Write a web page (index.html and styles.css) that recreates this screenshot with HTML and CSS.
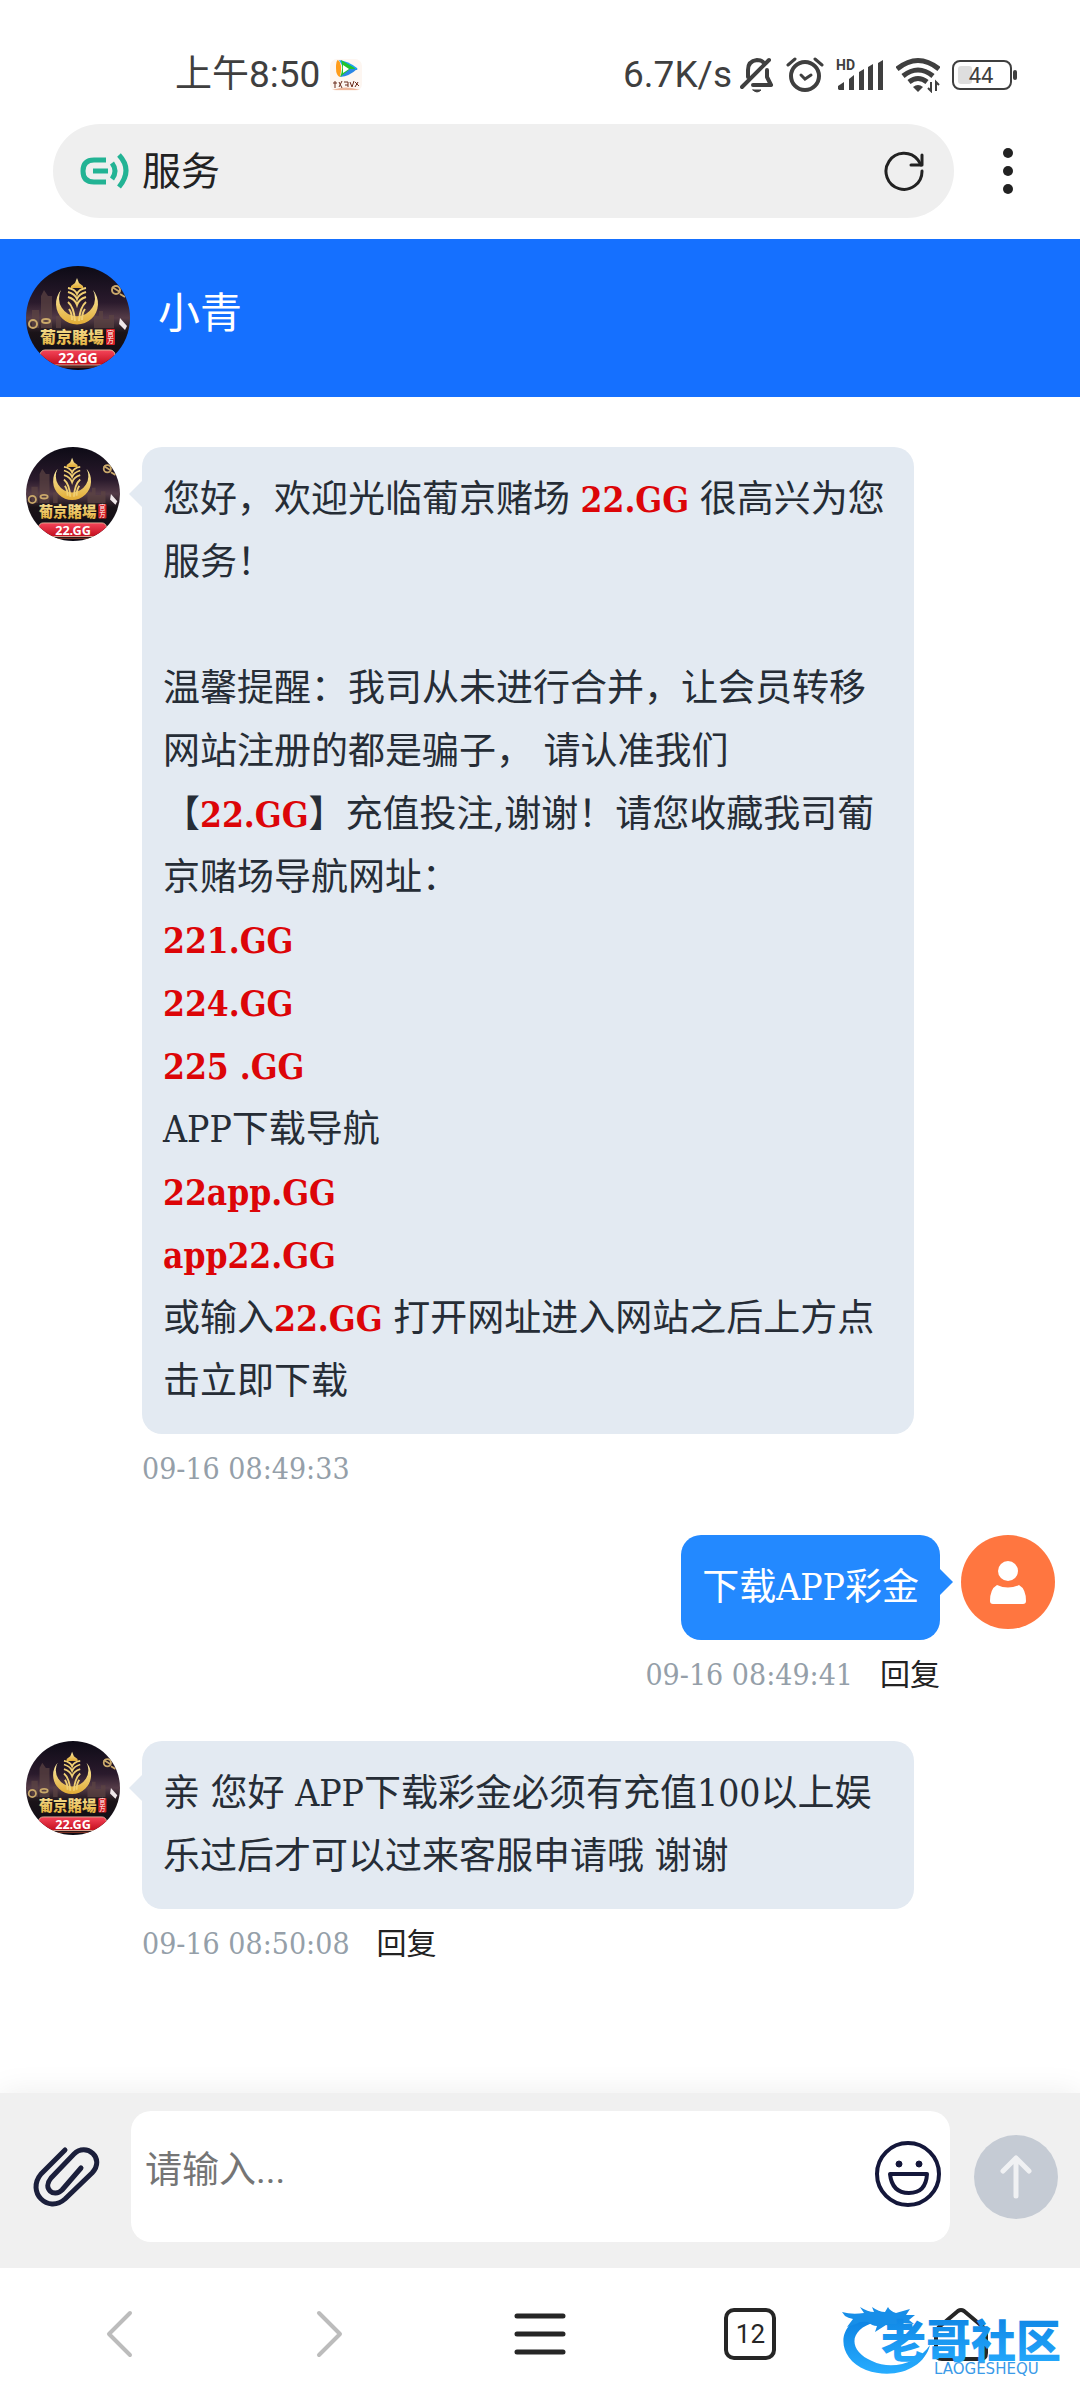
FILE: index.html
```html
<!DOCTYPE html>
<html lang="zh-CN">
<head>
    <meta charset="UTF-8">
    <meta name="viewport" content="width=device-width, initial-scale=1.0">
    <title>服务</title>
    <link rel="stylesheet" href="styles.css">
</head>
<body>
    <!-- shared avatar -->
    <svg class="defs" width="0" height="0" aria-hidden="true">
        <defs>
            <linearGradient id="night" x1="0" y1="0" x2="0" y2="1">
                <stop offset="0" stop-color="#0d0b16"/>
                <stop offset=".35" stop-color="#2a1a2c"/>
                <stop offset=".5" stop-color="#553c48"/>
                <stop offset=".64" stop-color="#1a1318"/>
                <stop offset="1" stop-color="#0c0a14"/>
            </linearGradient>
            <linearGradient id="gold" x1="0" y1="0" x2="0" y2="1">
                <stop offset="0" stop-color="#f9e9a4"/>
                <stop offset="1" stop-color="#e2ac35"/>
            </linearGradient>
            <linearGradient id="banner" x1="0" y1="0" x2="0" y2="1">
                <stop offset="0" stop-color="#f5455a"/>
                <stop offset="1" stop-color="#c30d1c"/>
            </linearGradient>
            <clipPath id="round"><circle cx="52" cy="52" r="52"/></clipPath>
            <symbol id="avatar" viewBox="0 0 104 104">
                <g clip-path="url(#round)">
                    <rect width="104" height="104" fill="url(#night)"/>
                    <path d="M15 62V30l3-6 4 6h4v32zM6 62V44h7v18zM30 62V50h5v12zM68 62V50h5v-5h4v8h6v-4h5v13z" fill="#5d4543" opacity=".7"/>
                    <g fill="none" stroke="#c9a86a" stroke-width="2">
                        <circle cx="90" cy="24" r="4"/><path d="M86 21l8 5M94 28l5 3"/>
                        <ellipse cx="7" cy="58" rx="4" ry="4"/><ellipse cx="20" cy="55" rx="4" ry="2"/>
                    </g>
                    <path d="M94 52l7 8-2 4-6-6z" fill="#f0e8ea"/>
                    <path d="M35 24a21 21 0 1 0 32 0a18 18 0 1 1-32 0z" fill="url(#gold)"/>
                    <path d="M51 12l2 5 4 3v2H45v-2l4-3z" fill="url(#gold)"/>
                    <g fill="none" stroke="#f0cf73" stroke-width="2">
                        <path d="M42 22q7 1 9 6q2-5 9-6"/>
                        <path d="M42 26q7 2 9 7q2-5 9-7M42 31q7 2 9 8q2-6 9-8"/>
                        <path d="M42 36q6 5 7 19M60 36q-6 5-7 19M43 43q3 4 3 11M59 43q-3 4-3 11"/>
                    </g>
                    <text class="avatar-name" x="14" y="77" fill="url(#gold)">葡京賭場</text>
                    <rect x="80" y="63" width="9" height="16" rx="1" fill="#d61f24"/>
                    <text class="avatar-tag" x="81" y="70">官</text>
                    <text class="avatar-tag" x="81" y="77">方</text>
                    <rect x="14" y="84" width="75" height="15" rx="5" fill="url(#banner)" stroke="#e5b49a" stroke-width="1"/>
                    <text class="avatar-site" x="52" y="97">22.GG</text>
                    <path d="M20 101h64" stroke="#a8432b" stroke-width="1"/>
                </g>
            </symbol>
        </defs>
    </svg>

    <div class="status-bar">
        <div class="status-left">
            <span>上午8:50</span>
            <svg width="32" height="32" viewBox="0 0 32 32">
                <rect width="32" height="32" rx="7" fill="#fdf6f1"/>
                <path d="M8 1q5 3 2 17q-4-1-4-9t2-8z" fill="#ff9c1a"/>
                <path d="M9 1q9 1 18 8q1 1 0 2L14 10z" fill="#1da0f2"/>
                <path d="M10 18q4-9 1-17l12 7q4 2 0 4z" fill="#1fc52c"/>
                <path d="M27 10q-7 7-17 8l10-8z" fill="#2b86e6"/>
                <path d="M13 6l6 4-6 4z" fill="#fff"/>
                <path d="M2 31q14-5 28 0z" fill="#eeb79c"/>
                <path d="M3 24h4M5 22v7M9 23l3 6M12 22l-3 6M14 23h4v5M15 26h3M20 23l2 5M24 22l-2 6M25 23l4 4M28 23l-3 5" stroke="#6b2c1c" stroke-width="1" fill="none"/>
            </svg>
        </div>
        <div class="status-right">
            <span>6.7K/s</span>
            <svg class="bell" width="34" height="36" viewBox="0 0 34 36" fill="none" stroke="#3f3f3f" stroke-width="4" stroke-linecap="round" stroke-linejoin="round">
                <path d="M2 30L29 3"/>
                <path d="M8 20v-7q0-9 9-10q5 0 7 3M27 13v7l4 8H13"/>
                <path d="M13 33h8q-4 4-8 0z" fill="#3f3f3f" stroke-width="1"/>
            </svg>
            <svg class="alarm" width="38" height="36" viewBox="0 0 38 36" fill="none" stroke="#3f3f3f" stroke-width="4" stroke-linecap="round">
                <circle cx="19" cy="19" r="14"/>
                <path d="M2 8l7-6M36 8l-7-6" stroke-width="3"/>
                <path d="M15 18l4 4 6-4" stroke-width="3"/>
            </svg>
            <svg class="signal" width="48" height="34" viewBox="0 0 48 34" fill="#3f3f3f">
                <text class="hd" x="0" y="12">HD</text>
                <path d="M2 31v-3l6-4v8H3zM13 21l5-4v15h-5zM23 14l5-3v21h-5zM32 9l5-3v26h-5zM42 5l5-3v30h-5z"/>
            </svg>
            <svg class="wifi" width="44" height="36" viewBox="0 0 44 36" fill="none" stroke="#3f3f3f" stroke-width="5">
                <path d="M1 12Q22-5 43 12M7 19q15-12 30 0M13 25q9-7 18 0"/>
                <path d="M17 30q5-4 10 0l-5 5z" fill="#3f3f3f" stroke="none"/>
                <path d="M35 25v9l-3-3M40 34v-9l3 3" stroke-width="2"/>
            </svg>
            <svg width="66" height="30" viewBox="0 0 66 30">
                <rect x="6" y="6" width="14" height="18" rx="3" fill="#dedede"/>
                <rect x="1" y="1" width="58" height="28" rx="7" fill="none" stroke="#3f3f3f" stroke-width="2"/>
                <path d="M63 12v6" stroke="#3f3f3f" stroke-width="4" stroke-linecap="round"/>
                <text class="battery" x="29" y="23">44</text>
            </svg>
        </div>
    </div>

    <div class="browser-bar">
        <div class="address">
            <svg width="50" height="36" viewBox="0 0 50 36" fill="none" stroke="#22b394" stroke-width="5">
                <path d="M26 7H14Q3 7 3 18t11 11h12"/>
                <path d="M13 18h15"/>
                <path d="M32 10q6 8 0 16M39 2q14 15 0 32"/>
            </svg>
            <span class="page-title">服务</span>
            <button type="button" aria-label="刷新">
                <svg width="40" height="40" viewBox="0 0 40 40" fill="none" stroke="#222" stroke-width="3" stroke-linecap="round" stroke-linejoin="round">
                    <path d="M38 20A18 18 0 1 1 34 9l3 5"/>
                    <path d="M38 4v10H27"/>
                </svg>
            </button>
        </div>
        <button type="button" class="more" aria-label="更多">
            <svg width="12" height="48" viewBox="0 0 12 48" fill="#222">
                <circle cx="6" cy="6" r="5"/><circle cx="6" cy="24" r="5"/><circle cx="6" cy="42" r="5"/>
            </svg>
        </button>
    </div>

    <header class="chat-header">
        <svg width="104" height="104"><use href="#avatar"/></svg>
        <h1>小青</h1>
    </header>

    <main class="chat">
        <div class="message">
            <svg class="avatar" width="94" height="94"><use href="#avatar"/></svg>
            <div class="content">
                <div class="bubble">您好，欢迎光临葡京赌场 <strong>22.GG</strong> 很高兴为您服务！<br><br>温馨提醒：我司从未进行合并，让会员转移网站注册的都是骗子， 请认准我们【<strong>22.GG</strong>】充值投注,谢谢！请您收藏我司葡京赌场导航网址：<br><strong>221.GG</strong><br><strong>224.GG</strong><br><strong>225 .GG</strong><br>APP下载导航<br><strong>22app.GG</strong><br><strong>app22.GG</strong><br>或输入<strong>22.GG</strong> 打开网址进入网站之后上方点击立即下载</div>
                <div class="meta"><time>09-16 08:49:33</time></div>
            </div>
        </div>

        <div class="message mine">
            <svg class="avatar" width="94" height="94" viewBox="0 0 94 94">
                <circle cx="47" cy="47" r="47" fill="#ff7640"/>
                <circle cx="47" cy="36" r="10" fill="#fff"/>
                <path d="M36 50q11 5 22 0q7 4 7 16q0 3-3 3H32q-3 0-3-3q0-12 7-16z" fill="#fff"/>
            </svg>
            <div class="content">
                <div class="bubble">下载APP彩金</div>
                <div class="meta"><time>09-16 08:49:41</time><button type="button">回复</button></div>
            </div>
        </div>

        <div class="message">
            <svg class="avatar" width="94" height="94"><use href="#avatar"/></svg>
            <div class="content">
                <div class="bubble">亲 您好 APP下载彩金必须有充值100以上娱乐过后才可以过来客服申请哦 谢谢</div>
                <div class="meta"><time>09-16 08:50:08</time><button type="button">回复</button></div>
            </div>
        </div>
    </main>

    <form class="composer">
        <button type="button" aria-label="附件">
            <svg width="68" height="62" viewBox="0 0 68 62" fill="none" stroke="#1b1f3b" stroke-width="5" stroke-linecap="round" stroke-linejoin="round">
                <path d="M33 4L9 28C-6 46 16 68 33 53L60 27C74 12 54-4 42 8L19 32C10 43 22 52 30 44L49 22"/>
            </svg>
        </button>
        <div class="input-box">
            <textarea id="message" rows="1" placeholder="请输入..." aria-label="请输入"></textarea>
            <button type="button" class="emoji" aria-label="表情">
                <svg width="68" height="68" viewBox="0 0 68 68" fill="none" stroke="#14173a" stroke-width="4" stroke-linejoin="round">
                    <circle cx="34" cy="34" r="31"/>
                    <path d="M16 34h37q-1 19-18 19T16 34z"/>
                    <circle cx="25" cy="24" r="3" fill="#14173a" stroke-width="1"/>
                    <circle cx="45" cy="24" r="3" fill="#14173a" stroke-width="1"/>
                </svg>
            </button>
        </div>
        <button type="submit" class="send" aria-label="发送">
            <svg width="32" height="44" viewBox="0 0 32 44" fill="none" stroke="#f0f1f3" stroke-width="5" stroke-linecap="round" stroke-linejoin="round">
                <path d="M16 41V3M3 16L16 3l13 13"/>
            </svg>
        </button>
    </form>

    <nav class="toolbar">
        <button type="button" aria-label="后退">
            <svg width="28" height="52" viewBox="0 0 28 52" fill="none" stroke="#bcbcbc" stroke-width="4" stroke-linecap="round" stroke-linejoin="round"><path d="M25 5L4 26l21 21"/></svg>
        </button>
        <button type="button" aria-label="前进">
            <svg width="28" height="52" viewBox="0 0 28 52" fill="none" stroke="#bcbcbc" stroke-width="4" stroke-linecap="round" stroke-linejoin="round"><path d="M3 5l21 21L3 47"/></svg>
        </button>
        <button type="button" aria-label="菜单">
            <svg width="60" height="52" viewBox="0 0 60 52" stroke="#262626" stroke-width="5" stroke-linecap="round"><path d="M7 8h46M7 26h46M7 44h46"/></svg>
        </button>
        <button type="button" class="tabs"><span>12</span></button>
        <button type="button" aria-label="主页">
            <svg width="54" height="54" viewBox="0 0 54 54" fill="none" stroke="#262626" stroke-width="4" stroke-linejoin="round"><path d="M24 4q3-2 6 0l19 16q3 3 3 6v20q0 6-6 6H8q-6 0-6-6V26q0-3 3-6z"/></svg>
        </button>
        <svg class="watermark" width="224" height="76" viewBox="0 0 224 76" aria-label="老哥社区">
            <defs>
                <linearGradient id="blue" x1="0" y1="0" x2="0" y2="1">
                    <stop offset="0" stop-color="#0b7fe0"/>
                    <stop offset="1" stop-color="#27adff"/>
                </linearGradient>
            </defs>
            <path d="M30 10C-6 14-8 52 24 65C52 75 82 64 88 40C76 58 50 66 30 56C6 46 6 24 34 17z" fill="url(#blue)"/>
            <path d="M0 7q10 3 22 1l-4-6q8 5 14 5l-2-5q7 5 13 5l3-5q2 4 8 6l14-4-4 6h9l-6 5 5 4-13-1-6 4-9-2-11 7 2-6q-5 0-9-4-8-1-12 2l-9 3 6-8q-5-1-8-3z" fill="#178ee8"/>
            <text class="mark-name" x="39" y="53" fill="url(#blue)">老哥社区</text>
            <text class="mark-latin" x="92" y="69">LAOGESHEQU</text>
        </svg>
    </nav>
</body>
</html>
```

FILE: styles.css
```css
* {
    box-sizing: border-box;
}
body {
    margin: 0;
    min-height: 100vh;
    display: flex;
    flex-direction: column;
    background-color: #fff;
    color: #262d36;
    font-family: "DejaVu Serif Condensed", "Noto Sans CJK SC", serif;
    font-size: 37px;
}
svg {
    display: block;
    flex-shrink: 0;
}
.defs {
    position: absolute;
}
button {
    padding: 0;
    border: none;
    background: none;
    color: inherit;
    font: inherit;
    cursor: pointer;
}

/* avatar artwork */
.avatar-name {
    font: 900 16px "Noto Sans CJK TC", sans-serif;
}
.avatar-tag {
    font: 7px "Noto Sans CJK SC", sans-serif;
    fill: #fff;
}
.avatar-site {
    font: bold 14px "Noto Sans", sans-serif;
    fill: #fff;
    text-anchor: middle;
}

/* phone status bar */
.status-bar {
    display: flex;
    justify-content: space-between;
    align-items: center;
    padding: 45px 62px 19px 175px;
    color: #3f3f3f;
    font-family: Roboto, "Noto Sans CJK SC", sans-serif;
    font-size: 37px;
    line-height: 60px;
}
.status-left,
.status-right {
    display: flex;
    align-items: center;
}
.status-left {
    gap: 10px;
}
.status-right {
    gap: 12px;
}
.bell {
    margin-left: -4px;
}
.hd {
    font: bold 14px Roboto, sans-serif;
}
.battery {
    font: 22px Roboto, sans-serif;
    fill: #3f3f3f;
    text-anchor: middle;
}

/* address bar */
.browser-bar {
    display: flex;
    align-items: center;
    padding: 0 66px 21px 53px;
    gap: 48px;
    font-family: Roboto, "Noto Sans CJK SC", sans-serif;
}
.address {
    flex: 1;
    display: flex;
    align-items: center;
    gap: 12px;
    height: 94px;
    padding: 0 30px 0 27px;
    border-radius: 47px;
    background-color: #efefef;
    color: #222;
}
.page-title {
    flex: 1;
    padding-bottom: 6px;
    font-size: 39px;
}

/* chat header */
.chat-header {
    display: flex;
    align-items: center;
    gap: 28px;
    padding: 27px 26px;
    background-color: #1570ff;
    color: #fff;
}
.chat-header h1 {
    margin: 0;
    padding-bottom: 8px;
    font-size: 42px;
    font-weight: normal;
    line-height: 60px;
}

/* messages */
.chat {
    flex: 1;
    padding: 50px 25px 0 26px;
}
.message {
    display: flex;
    align-items: flex-start;
    gap: 22px;
    margin-bottom: 44px;
    padding-right: 141px;
}
.message.mine {
    flex-direction: row-reverse;
    gap: 21px;
    padding-right: 0;
    padding-left: 141px;
}
.content {
    flex: 1;
    display: flex;
    flex-direction: column;
    align-items: flex-start;
}
.mine .content {
    align-items: flex-end;
}
.bubble {
    position: relative;
    padding: 21px;
    border-radius: 20px;
    background-color: #e3eaf2;
    line-height: 63px;
    text-spacing-trim: space-all;
}
.bubble::before {
    content: "";
    position: absolute;
    top: 34px;
    right: 100%;
    border: 13px solid transparent;
    border-left-width: 0;
    border-right-color: #e3eaf2;
}
.mine .bubble {
    background-color: #2389ff;
    color: #fff;
}
.mine .bubble::before {
    right: auto;
    left: 100%;
    border-width: 13px 0 13px 13px;
    border-left-color: #2389ff;
}
.bubble strong {
    color: #dc0508;
    font-size: 35px;
    line-height: 1;
}
.meta {
    display: flex;
    align-items: center;
    gap: 27px;
    margin-top: 13px;
    font-size: 30px;
    line-height: 44px;
}
.meta time {
    color: #959fa9;
}
.meta button {
    color: #222;
}

/* message input */
.composer {
    display: flex;
    align-items: center;
    gap: 24px;
    padding: 18px 22px 26px 32px;
    background-color: #f0f0f0;
    box-shadow: 0 0 30px rgba(0, 0, 0, 0.08);
}
.input-box {
    flex: 1;
    display: flex;
    align-items: center;
    margin-left: 7px;
    padding-right: 8px;
    border-radius: 20px;
    background-color: #fff;
}
.input-box textarea {
    flex: 1;
    min-width: 0;
    height: 131px;
    padding: 28px 14px 39px;
    border: none;
    outline: none;
    resize: none;
    background: none;
    font-family: Roboto, "Noto Sans CJK SC", sans-serif;
    font-size: 37px;
    line-height: 64px;
}
.input-box textarea::placeholder {
    color: #757575;
}
.emoji {
    padding-bottom: 6px;
}
.send {
    display: flex;
    align-items: center;
    justify-content: center;
    width: 84px;
    height: 84px;
    border-radius: 50%;
    background-color: #c5cbd4;
}

/* browser toolbar */
.toolbar {
    position: relative;
    display: grid;
    grid-template-columns: repeat(5, 1fr);
    place-items: center;
    height: 132px;
    padding: 0 14px;
    background-color: #fff;
}
.tabs span {
    display: block;
    width: 52px;
    height: 52px;
    border: 4px solid #262626;
    border-radius: 10px;
    color: #262626;
    font: 26px/44px Roboto, sans-serif;
}
.watermark {
    position: absolute;
    right: 14px;
    top: 37px;
}
.mark-name {
    font: 900 45px "Noto Sans CJK SC", sans-serif;
}
.mark-latin {
    font: 15px "DejaVu Sans", sans-serif;
    fill: #3a9ae8;
}
```
